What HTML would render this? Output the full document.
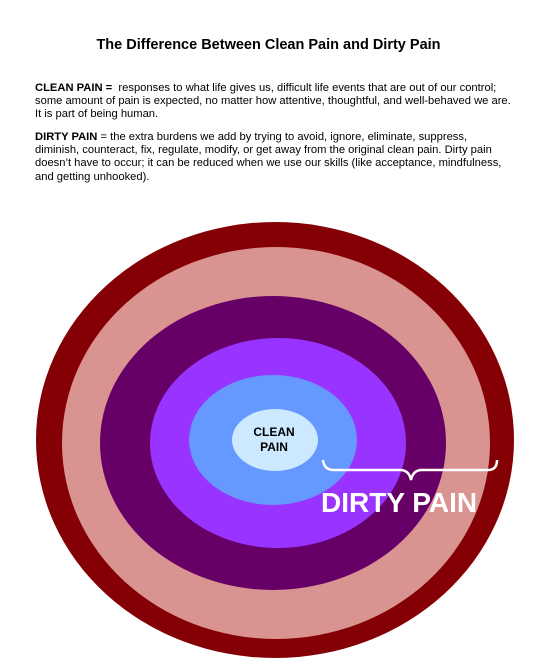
<!DOCTYPE html>
<html><head><meta charset="utf-8"><style>
body{margin:0;width:537px;height:660px;background:#fff;overflow:hidden;position:relative;font-family:"Liberation Sans",Arial,sans-serif;color:#000}
h1{position:absolute;top:37px;left:0;width:537px;text-align:center;font-size:14.5px;font-weight:bold;margin:0}
p{position:absolute;left:35px;width:500px;margin:0;font-size:11.2px;line-height:13.2px;white-space:nowrap}
</style></head><body>
<h1>The Difference Between Clean Pain and Dirty Pain</h1>
<p style="top:82px"><b>CLEAN PAIN =</b>&nbsp; responses to what life gives us, difficult life events that are out of our control;<br>some amount of pain is expected, no matter how attentive, thoughtful, and well-behaved we are.<br>It is part of being human.</p>
<p style="top:131px"><b>DIRTY PAIN</b> = the extra burdens we add by trying to avoid, ignore, eliminate, suppress,<br>diminish, counteract, fix, regulate, modify, or get away from the original clean pain. Dirty pain<br>doesn’t have to occur; it can be reduced when we use our skills (like acceptance, mindfulness,<br>and getting unhooked).</p>
<svg width="537" height="660" style="position:absolute;left:0;top:0">
<ellipse cx="275" cy="440" rx="239" ry="218" fill="#850004"/>
<ellipse cx="276" cy="443" rx="214" ry="196" fill="#d99391"/>
<ellipse cx="273" cy="443" rx="173" ry="147" fill="#660066"/>
<ellipse cx="278" cy="443" rx="128" ry="105" fill="#9933ff"/>
<ellipse cx="273" cy="440" rx="84" ry="65" fill="#6699ff"/>
<ellipse cx="275" cy="440" rx="43" ry="31" fill="#cce9ff"/>
<text x="274" y="436" text-anchor="middle" font-family="Liberation Sans" font-weight="bold" font-size="12">CLEAN</text>
<text x="274" y="451" text-anchor="middle" font-family="Liberation Sans" font-weight="bold" font-size="12">PAIN</text>
<path d="M323 460 Q324 470 334 470 L400 470 Q409 470 411 480 Q413 470 422 470 L488 470 Q497 470 497 460" fill="none" stroke="#fff" stroke-width="2.5"/>
<text x="321" y="512" font-family="Liberation Sans" font-weight="bold" font-size="28" fill="#fff">DIRTY PAIN</text>
</svg>
</body></html>
